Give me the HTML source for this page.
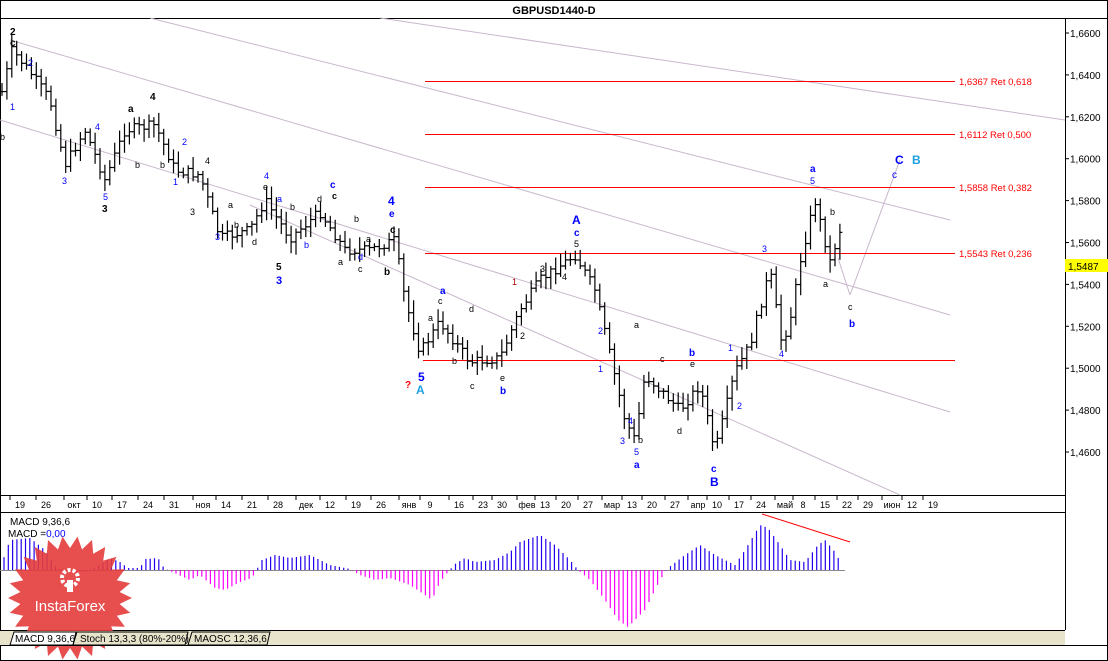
<!DOCTYPE html>
<html><head><meta charset="utf-8"><style>
body{margin:0;background:#fff;width:1108px;height:661px;overflow:hidden;font-family:"Liberation Sans",sans-serif}
svg{display:block}
</style></head><body>
<svg id="s" width="1108" height="661" xmlns="http://www.w3.org/2000/svg" font-family="Liberation Sans, sans-serif">
<rect x="0.5" y="0.5" width="1107" height="660" fill="#fff" stroke="#000"/>
<line x1="0" y1="18.5" x2="1108" y2="18.5" stroke="#000"/>
<text x="554" y="14" font-size="11" font-weight="bold" text-anchor="middle">GBPUSD1440-D</text>
<line x1="1065.5" y1="18" x2="1065.5" y2="630" stroke="#000"/>
<line x1="0" y1="495.5" x2="1065" y2="495.5" stroke="#000"/>
<line x1="0" y1="512.5" x2="1065" y2="512.5" stroke="#000"/>
<line x1="0" y1="630.5" x2="1065" y2="630.5" stroke="#000"/>
<g stroke="#c8b8cc" stroke-width="1" fill="none">
<line x1="150" y1="18" x2="950" y2="220"/>
<line x1="380" y1="18" x2="1065" y2="120"/>
<line x1="10" y1="40" x2="950" y2="315"/>
<line x1="0" y1="120" x2="950" y2="412"/>
<line x1="250" y1="205" x2="900" y2="495"/>
<line x1="838" y1="258" x2="850" y2="295"/>
<line x1="850" y1="295" x2="900" y2="160"/>
</g>
<g fill="#f00">
<rect x="425" y="81" width="530" height="1"/>
<rect x="425" y="134" width="530" height="1"/>
<rect x="425" y="187" width="530" height="1"/>
<rect x="425" y="253" width="530" height="1"/>
<rect x="423" y="360" width="532" height="1"/>
</g>
<line x1="762" y1="514" x2="850" y2="542" stroke="#f00"/>
<g fill="#f00" font-size="9.5">
<text x="959" y="85">1,6367 Ret 0,618</text>
<text x="959" y="138">1,6112 Ret 0,500</text>
<text x="959" y="191">1,5858 Ret 0,382</text>
<text x="959" y="257">1,5543 Ret 0,236</text>
</g>
<g id="axis" font-size="10"></g>
<rect x="1065" y="259" width="43" height="13" fill="#ff0"/>
<text x="1068" y="270" font-size="10">1,5487</text>
<g id="bars" stroke="#000" stroke-width="1.2"></g>
<g id="macd" stroke-width="1.2"></g>
<g id="dates" font-size="9"></g>
<text x="10" y="525" font-size="10">MACD 9,36,6</text>
<text x="8" y="537" font-size="10">MACD =<tspan fill="#00f">0,00</tspan></text>
<g font-size="10" font-weight="bold">
<text x="10" y="35">2</text><text x="10" y="46">c</text>
<text x="150" y="100">4</text><text x="128" y="112">a</text>
<text x="330" y="188" fill="#00f">c</text><text x="388" y="205" fill="#00f" font-size="12">4</text><text x="389" y="217" fill="#00f">e</text>
<text x="390" y="233">c</text><text x="384" y="275">b</text>
<text x="276" y="270">5</text><text x="276" y="284" font-size="11" fill="#00f">3</text>
<text x="572" y="224" fill="#00f" font-size="12">A</text><text x="574" y="236" fill="#00f">c</text>
<text x="418" y="381" fill="#00f" font-size="12">5</text><text x="416" y="394" fill="#1ca0e0" font-size="12">A</text><text x="405" y="388" fill="#f00">?</text>
<text x="500" y="394" fill="#00f">b</text><text x="440" y="294" fill="#00f">a</text>
<text x="634" y="468" fill="#00f">a</text><text x="689" y="356" fill="#00f">b</text>
<text x="710" y="486" fill="#00f" font-size="12">B</text><text x="711" y="472" fill="#00f">c</text>
<text x="849" y="327" fill="#00f">b</text><text x="810" y="172" fill="#00f">a</text>
<text x="895" y="164" fill="#00f" font-size="12">C</text><text x="912" y="164" fill="#1ca0e0" font-size="12">B</text>
<text x="892" y="178" fill="#00f" font-weight="normal">c</text>
</g>
<g font-size="9">
<text x="28" y="66" fill="#00f">2</text><text x="10" y="110" fill="#00f">1</text><text x="62" y="184" fill="#00f">3</text>
<text x="95" y="130" fill="#00f">4</text><text x="103" y="200" fill="#00f">5</text><text x="102" y="212" font-weight="bold" font-size="10">3</text>
<text x="182" y="145" fill="#00f">2</text><text x="173" y="185" fill="#00f">1</text><text x="215" y="240" fill="#00f">3</text>
<text x="264" y="179" fill="#00f">4</text><text x="277" y="202" fill="#00f">a</text><text x="304" y="248" fill="#00f">b</text>
<text x="358" y="260" fill="#00f">d</text><text x="598" y="334" fill="#00f">2</text><text x="598" y="372" fill="#00f">1</text>
<text x="620" y="444" fill="#00f">3</text><text x="628" y="424" fill="#00f">4</text><text x="634" y="455" fill="#00f">5</text>
<text x="728" y="351" fill="#00f">1</text><text x="737" y="409" fill="#00f">2</text><text x="762" y="252" fill="#00f">3</text>
<text x="779" y="357" fill="#00f">4</text><text x="810" y="184" fill="#00f">5</text>
<text x="574" y="247">5</text><text x="512" y="285" fill="#a00">1</text><text x="520" y="339">2</text><text x="540" y="272">3</text><text x="562" y="280">4</text>
<text x="438" y="304">c</text><text x="428" y="321">a</text><text x="469" y="312">d</text><text x="452" y="364">b</text>
<text x="470" y="389">c</text><text x="500" y="381">e</text><text x="634" y="328">a</text><text x="660" y="362">c</text>
<text x="690" y="367">e</text><text x="677" y="434">d</text><text x="638" y="443">b</text>
<text x="823" y="287">a</text><text x="830" y="215">b</text><text x="848" y="310">c</text>
<text x="205" y="164">4</text><text x="228" y="208">a</text><text x="234" y="228">b</text><text x="252" y="245">d</text>
<text x="263" y="190">e</text><text x="290" y="210">b</text><text x="317" y="202">d</text><text x="354" y="222">b</text>
<text x="366" y="242">a</text><text x="338" y="265">a</text><text x="358" y="272">c</text><text x="332" y="199" font-weight="bold">c</text>
<text x="0" y="140">b</text><text x="135" y="168">b</text><text x="160" y="168">b</text><text x="190" y="215">3</text>
</g>
<g id="star"></g>
<rect x="0" y="631" width="1065" height="14" fill="#e8e4cc"/>
<line x1="0" y1="645.5" x2="1108" y2="645.5" stroke="#000"/>
<g font-size="10">
<path d="M10,645 L14,632 L76,632 L73,645Z" fill="#fff" stroke="#000"/><text x="15" y="642">MACD 9,36,6</text>
<path d="M73,645 L77,632 L188,632 L185,645Z" fill="none" stroke="#000"/><text x="80" y="642">Stoch 13,3,3 (80%-20%)</text>
<path d="M188,645 L192,632 L270,632 L267,645Z" fill="none" stroke="#000"/><text x="194" y="642">MAOSC 12,36,6</text>
</g>
</svg>
<script>
var NS="http://www.w3.org/2000/svg";
function el(p,t,a,txt){var e=document.createElementNS(NS,t);for(var k in a)e.setAttribute(k,a[k]);if(txt!=null)e.textContent=txt;document.getElementById(p).appendChild(e);return e;}
var ps=["1,6600","1,6400","1,6200","1,6000","1,5800","1,5600","1,5400","1,5200","1,5000","1,4800","1,4600"];
for(var i=0;i<ps.length;i++){var y=33+i*41.9;el("axis","line",{x1:1065,y1:y,x2:1069,y2:y,stroke:"#000"});el("axis","text",{x:1070,y:y+4},ps[i]);}
var d=[[20,"19"],[46,"26"],[74,"окт"],[97,"10"],[122,"17"],[148,"24"],[174,"31"],[203,"ноя"],[226,"14"],[252,"21"],[278,"28"],[306,"дек"],[330,"12"],[356,"19"],[381,"26"],[409,"янв"],[430,"9"],[459,"16"],[483,"23"],[502,"30"],[527,"фев"],[545,"13"],[566,"20"],[588,"27"],[612,"мар"],[632,"13"],[652,"20"],[675,"27"],[698,"апр"],[717,"10"],[739,"17"],[761,"24"],[785,"май"],[803,"8"],[825,"15"],[847,"22"],[868,"29"],[892,"июн"],[912,"12"],[933,"19"]];
d.forEach(function(q){el("dates","text",{x:q[0],y:508,"text-anchor":"middle"},q[1]);el("dates","line",{x1:q[0]-10,y1:496,x2:q[0]-10,y2:500,stroke:"#000"});});
var w=[[0,100],[12,50],[30,72],[50,100],[65,165],[85,130],[105,180],[125,130],[155,125],[175,170],[200,175],[220,238],[250,230],[265,200],[290,238],[320,212],[345,250],[370,250],[395,240],[405,300],[420,352],[440,322],[470,362],[500,358],[520,310],[540,280],[575,255],[595,290],[610,355],[625,420],[635,440],[645,375],[680,410],[700,385],[715,452],[735,372],[750,345],[770,270],[782,345],[792,312],[800,262],[815,200],[830,262],[840,230],[842,265]];
function py(x){for(var i=0;i<w.length-1;i++){if(x>=w[i][0]&&x<=w[i+1][0]){var t=(x-w[i][0])/(w[i+1][0]-w[i][0]);return w[i][1]+t*(w[i+1][1]-w[i][1]);}}return 265;}
var seed=7;function r(){seed=(seed*9301+49297)%233280;return seed/233280;}
var prev=py(2);
for(var x=2;x<=842;x+=4.9){var c=py(x)+(r()-0.5)*10;var hi=Math.min(prev,c)-3-r()*10,lo=Math.max(prev,c)+3+r()*10;
el("bars","line",{x1:x,y1:hi,x2:x,y2:lo});el("bars","line",{x1:x-2.5,y1:prev,x2:x,y2:prev});el("bars","line",{x1:x,y1:c,x2:x+2.5,y2:c});prev=c;}
var m=[[3,10],[10,30],[30,32],[45,20],[55,4],[65,-2],[85,-2],[100,5],[110,12],[120,8],[128,2],[140,2],[145,11],[158,12],[164,2],[170,-1],[190,-10],[200,-5],[215,-18],[225,-20],[240,-12],[252,-8],[262,10],[275,15],[290,12],[310,15],[330,5],[350,1],[360,-5],[375,-10],[390,-8],[410,-15],[425,-25],[432,-30],[440,-12],[448,-2],[455,6],[465,12],[475,8],[495,10],[510,18],[520,28],[540,35],[555,25],[570,10],[578,0],[590,-10],[605,-30],[618,-50],[628,-57],[645,-40],[660,-10],[668,2],[685,15],[700,25],[715,15],[735,5],[745,20],[760,45],[768,42],[780,25],[790,10],[805,8],[818,25],[825,30],[835,18],[842,5]];
function mv(x){for(var i=0;i<m.length-1;i++){if(x>=m[i][0]&&x<=m[i+1][0]){var t=(x-m[i][0])/(m[i+1][0]-m[i][0]);return m[i][1]+t*(m[i+1][1]-m[i][1]);}}return 0;}
el("macd","line",{x1:0,y1:570.5,x2:845,y2:570.5,stroke:"#888","stroke-width":1});
for(var x=4;x<=842;x+=4.3){var v=mv(x);var y=570-v;el("macd","line",{x1:x,y1:570,x2:x,y2:y,stroke:v>=0?"#2200ee":"#ff00ff"});}
var pts=[],cx=70,cy=598,N=26;for(var i=0;i<N*2;i++){var a=i*Math.PI/N,rr=i%2?50:62;pts.push((cx+rr*Math.cos(a)).toFixed(1)+","+(cy+rr*Math.sin(a)).toFixed(1));}
el("star","polygon",{points:pts.join(" "),fill:"#e43c3c","fill-opacity":"0.9"});
el("star","circle",{cx:70,cy:578,r:8,fill:"none",stroke:"#fff","stroke-width":4,"stroke-dasharray":"3 2"});
el("star","rect",{x:67,y:580,width:6,height:12,fill:"#fff"});
el("star","text",{x:70,y:611,"font-size":"15",fill:"#fff","text-anchor":"middle"},"InstaForex");
</script>
</body></html>
